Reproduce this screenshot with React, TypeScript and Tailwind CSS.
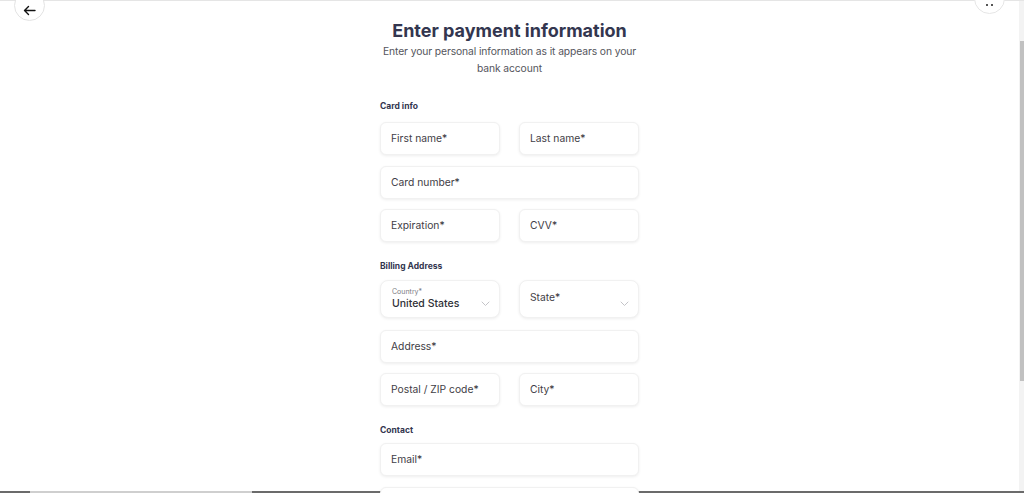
import React from "react";

const font = { fontFamily: "Inter, 'Noto Sans', sans-serif" };

function Field({ label, className = "" }: { label?: string; className?: string }) {
  return (
    <div
      className={`h-[33px] rounded-[6px] border border-[#f1f1f1] bg-white shadow-[0_1px_3px_rgba(0,0,0,0.07)] flex items-center pl-[10px] text-[10.3px] text-[#3f4046] ${className}`}
    >
      {label}
    </div>
  );
}

function Chevron() {
  return (
    <svg width="9" height="6" viewBox="0 0 9 6" fill="none">
      <path d="M1 1l3.5 3.5L8 1" stroke="#c4c4c8" strokeWidth="1" strokeLinecap="round" strokeLinejoin="round" />
    </svg>
  );
}

function SectionLabel({ children, className = "" }: { children: React.ReactNode; className?: string }) {
  return <div className={`text-[8.5px] font-bold text-[#33364f] leading-[12px] ${className}`}>{children}</div>;
}

export default function App() {
  return (
    <div className="w-[1024px] h-[493px] overflow-hidden bg-white flex flex-col" style={font}>
      <div className="flex flex-1 min-h-0 border-t border-[#e5e5e5]">
        <div className="relative flex-1 flex flex-col items-center pt-[18px]">
          <button className="absolute left-[14px] top-[-11px] w-[31px] h-[31px] rounded-full border border-[#e3e3e3] bg-white flex items-center justify-center">
            <svg width="13" height="11" viewBox="0 0 13 11" fill="none" className="mt-[10px]">
              <path d="M12 5.5H1.5M5.5 1.5L1.5 5.5l4 4" stroke="#111" strokeWidth="1.4" strokeLinecap="round" strokeLinejoin="round" />
            </svg>
          </button>
          <button className="absolute right-[14px] top-[-18px] w-[31px] h-[31px] rounded-full border border-[#e6e6e6] bg-white flex items-end justify-center pb-[7px]">
            <div className="flex gap-[3px]">
              <span className="w-[2px] h-[2px] bg-[#555]" />
              <span className="w-[2px] h-[2px] bg-[#555]" />
            </div>
          </button>

          <h1 className="text-[18px] leading-[24px] font-bold text-[#33364f]">Enter payment information</h1>
          <p className="w-[272px] text-center text-[10.3px] tracking-[-0.1px] leading-[17px] text-[#54555c]">
            Enter your personal information as it appears on your bank account
          </p>

          <div className="w-[259px] mt-[23px]">
            <SectionLabel>Card info</SectionLabel>
            <div className="mt-[10px] grid grid-cols-2 gap-x-[19px]">
              <Field label="First name*" />
              <Field label="Last name*" />
            </div>
            <Field label="Card number*" className="mt-[11px]" />
            <div className="mt-[10px] grid grid-cols-2 gap-x-[19px]">
              <Field label="Expiration*" />
              <Field label="CVV*" />
            </div>

            <SectionLabel className="mt-[18px]">Billing Address</SectionLabel>
            <div className="mt-[8px] grid grid-cols-2 gap-x-[19px]">
              <div className="h-[38px] rounded-[8px] border border-[#f1f1f1] bg-white shadow-[0_1px_3px_rgba(0,0,0,0.07)] flex items-center justify-between pl-[11px] pr-[9px]">
                <div className="flex flex-col">
                  <span className="text-[7px] leading-[9px] text-[#7a7b82]">Country*</span>
                  <span className="text-[10.5px] leading-[15px] font-medium text-[#2f3037]">United States</span>
                </div>
                <div className="mt-[10px]"><Chevron /></div>
              </div>
              <div className="h-[38px] rounded-[8px] border border-[#f1f1f1] bg-white shadow-[0_1px_3px_rgba(0,0,0,0.07)] flex items-center justify-between pl-[10px] pr-[9px]">
                <span className="text-[10.3px] text-[#3f4046] mb-[2px]">State*</span>
                <div className="mt-[10px]"><Chevron /></div>
              </div>
            </div>
            <Field label="Address*" className="mt-[12px]" />
            <div className="mt-[10px] grid grid-cols-2 gap-x-[19px]">
              <Field label="Postal / ZIP code*" />
              <Field label="City*" />
            </div>

            <SectionLabel className="mt-[18px]">Contact</SectionLabel>
            <Field label="Email*" className="mt-[7px]" />
            <Field className="mt-[11px]" />
          </div>
        </div>
        <div className="w-[5px] bg-[#f3f3f3] flex flex-col pt-[40px]">
          <div className="h-[340px] w-[4px] ml-[1px] bg-[#c1c1c1]" />
        </div>
      </div>
      <div className="h-[2px] flex shrink-0">
        <div className="w-[30px] bg-[#6b6b6b]" />
        <div className="w-[222px] bg-[#cfcfcf]" />
        <div className="flex-1 bg-[#6b6b6b]" />
      </div>
    </div>
  );
}
